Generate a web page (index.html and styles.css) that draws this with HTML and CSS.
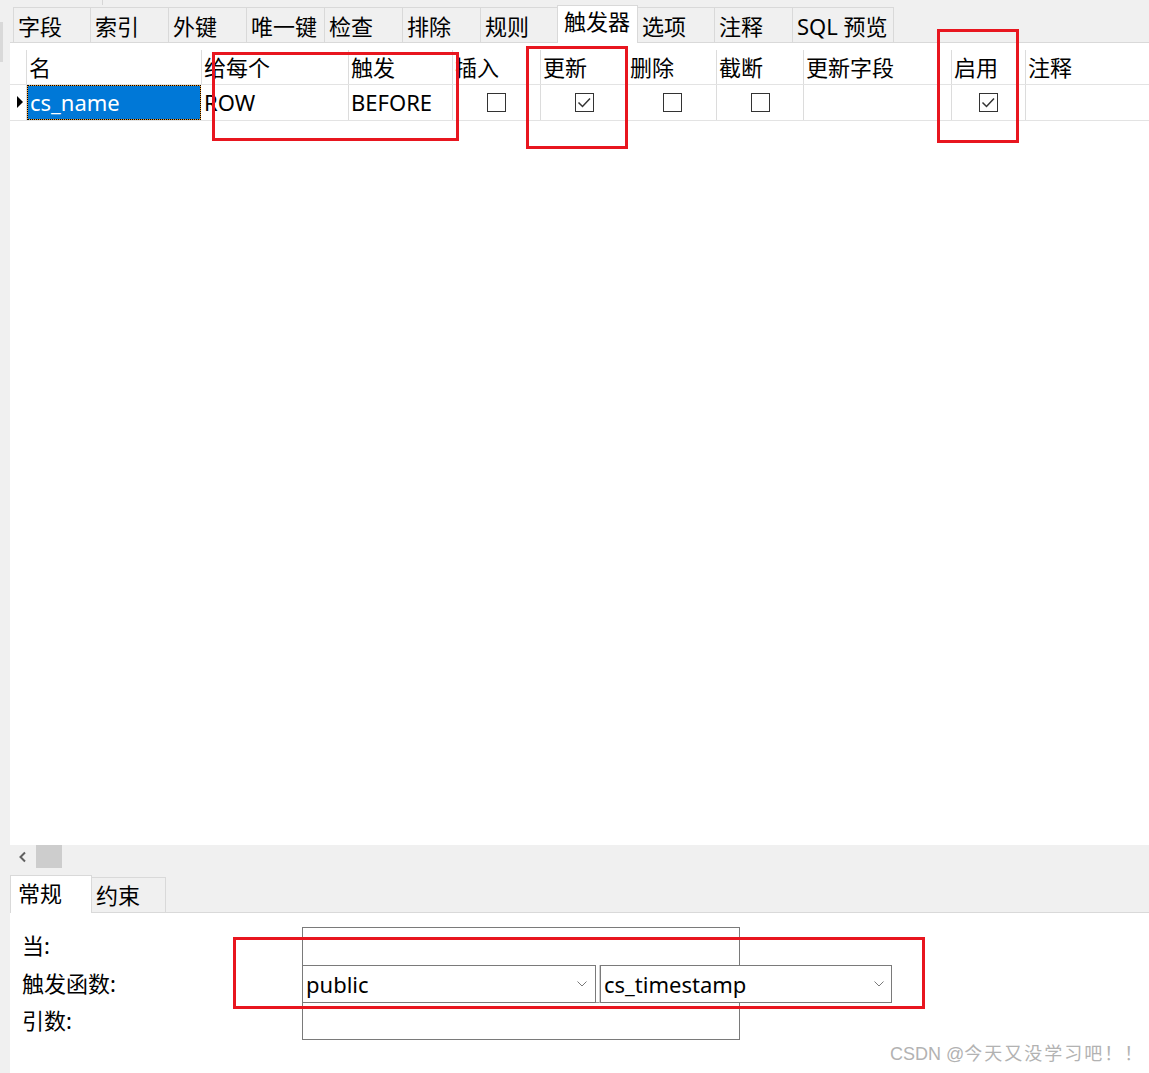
FILE: index.html
```html
<!DOCTYPE html>
<html lang="zh-CN">
<head>
<meta charset="utf-8">
<title>触发器</title>
<link rel="stylesheet" href="styles.css">
</head>
<body>
<div class="app">
  <div class="gutter"><div class="gutter-thumb"></div></div>
  <div class="content">
    <div class="topstrip"><span class="topstrip-tick"></span></div>
    <div class="tabbar">
      <div class="tab w77">字段</div>
      <div class="tab w78">索引</div>
      <div class="tab w78">外键</div>
      <div class="tab w78">唯一键</div>
      <div class="tab w78">检查</div>
      <div class="tab w78">排除</div>
      <div class="tab w77">规则</div>
      <div class="tab tab-active w81">触发器</div>
      <div class="tab w76">选项</div>
      <div class="tab w78">注释</div>
      <div class="tab tab-last w102">SQL 预览</div>
    </div>

    <div class="grid-area">
      <div class="grid-row grid-head">
        <div class="cell"></div>
        <div class="cell">名</div>
        <div class="cell">给每个</div>
        <div class="cell">触发</div>
        <div class="cell">插入</div>
        <div class="cell">更新</div>
        <div class="cell">删除</div>
        <div class="cell">截断</div>
        <div class="cell">更新字段</div>
        <div class="cell">启用</div>
        <div class="cell cell-last">注释</div>
      </div>
      <div class="grid-row grid-data">
        <div class="cell cell-indicator"><span class="row-arrow"></span></div>
        <div class="cell cell-selected">cs_name</div>
        <div class="cell">ROW</div>
        <div class="cell">BEFORE</div>
        <div class="cell cell-check"><span class="cb"></span></div>
        <div class="cell cell-check"><span class="cb"><svg viewBox="0 0 17 17" width="17" height="17"><polyline points="2.5,8.5 6.5,12.5 14,4.5" fill="none" stroke="#333" stroke-width="1.5"/></svg></span></div>
        <div class="cell cell-check"><span class="cb"></span></div>
        <div class="cell cell-check"><span class="cb"></span></div>
        <div class="cell"></div>
        <div class="cell cell-check"><span class="cb"><svg viewBox="0 0 17 17" width="17" height="17"><polyline points="2.5,8.5 6.5,12.5 14,4.5" fill="none" stroke="#333" stroke-width="1.5"/></svg></span></div>
        <div class="cell cell-last"></div>
      </div>
    </div>

    <div class="hscroll">
      <svg class="hscroll-arrow" viewBox="0 0 10 12" width="10" height="12"><polyline points="7,1.5 2.5,6 7,10.5" fill="none" stroke="#606060" stroke-width="2"/></svg>
      <div class="hscroll-thumb"></div>
    </div>

    <div class="subtabs">
      <div class="subtab subtab-active">常规</div>
      <div class="subtab">约束</div>
    </div>

    <div class="form">
      <div class="form-label">当:</div>
      <div class="textbox textbox-top"></div>
      <div class="form-label">触发函数:</div>
      <div class="select-row">
        <div class="select select-schema"><span>public</span><svg viewBox="0 0 10 6" width="10" height="6"><polyline points="0.5,0.5 5,5 9.5,0.5" fill="none" stroke="#7a7a7a" stroke-width="1"/></svg></div>
        <div class="select-split"></div>
        <div class="select select-func"><span>cs_timestamp</span><svg viewBox="0 0 10 6" width="10" height="6"><polyline points="0.5,0.5 5,5 9.5,0.5" fill="none" stroke="#7a7a7a" stroke-width="1"/></svg></div>
      </div>
      <div class="form-label">引数:</div>
      <div class="textbox textbox-bottom"></div>
    </div>
  </div>

  <div class="mark mark-1"></div>
  <div class="mark mark-2"></div>
  <div class="mark mark-3"></div>
  <div class="mark mark-4"></div>

  <div class="watermark">CSDN @<span class="watermark-cjk">今天又没学习吧！！</span></div>
</div>
</body>
</html>
```

FILE: styles.css
```css
* {
  box-sizing: border-box;
}

html,
body {
  margin: 0;
  padding: 0;
}

body {
  background: #f0f0f0;
  font-family: "Noto Sans", "Noto Sans CJK SC", sans-serif;
  font-size: 22px;
  color: #000;
  overflow: hidden;
}

.app {
  position: relative;
  display: flex;
  width: 1149px;
  height: 1073px;
}

.gutter {
  width: 10px;
  flex: none;
}

.gutter-thumb {
  margin-top: 22px;
  width: 3px;
  height: 40px;
  background: #d9d9d9;
}

.content {
  flex: 1;
  min-width: 0;
  display: flex;
  flex-direction: column;
}

/* top strip */
.topstrip {
  height: 5px;
  display: flex;
}

.topstrip-tick {
  margin-left: 92px;
  width: 1px;
  height: 5px;
  background: #d6d6d6;
}

/* main tab bar */
.tabbar {
  height: 38px;
  display: flex;
  align-items: flex-end;
  padding-left: 3px;
  border-bottom: 1px solid #d9d9d9;
}

.tab {
  flex: none;
  height: 35px;
  padding: 5px 0 0 4px;
  line-height: 26px;
  white-space: nowrap;
  background: #f0f0f0;
  border-top: 1px solid #d9d9d9;
  border-left: 1px solid #d9d9d9;
}

.tab-last {
  border-right: 1px solid #d9d9d9;
}

.tab-active {
  height: 38px;
  margin-bottom: -1px;
  padding: 2px 0 0 6px;
  background: #fff;
  border-right: 1px solid #d9d9d9;
}

.tab-active + .tab {
  border-left: none;
  padding-left: 4px;
}

.w76 { width: 76px; }
.w77 { width: 77px; }
.w78 { width: 78px; }
.w81 { width: 81px; }
.w102 { width: 102px; }

/* grid */
.grid-area {
  height: 802px;
  padding-top: 7px;
  background: #fff;
}

.grid-row {
  display: grid;
  grid-template-columns: 17px 175px 147px 104px 88px 87px 89px 87px 148px 74px 1fr;
  border-bottom: 1px solid #e3e3e3;
}

.grid-head {
  height: 35px;
}

.grid-data {
  height: 36px;
}

.cell {
  display: flex;
  align-items: center;
  padding-left: 2px;
  line-height: 30px;
  white-space: nowrap;
  overflow: hidden;
  border-right: 1px solid #dcdcdc;
}

.cell-last {
  border-right: none;
}

.grid-data .cell {
  padding-bottom: 1px;
}

.cell-indicator {
  padding-left: 7px;
}

.row-arrow {
  width: 0;
  height: 0;
  border-left: 6px solid #000;
  border-top: 6px solid transparent;
  border-bottom: 6px solid transparent;
}

.cell-selected {
  margin-right: 1px;
  padding-left: 2px;
  color: #fff;
  border: 1px dotted #000;
  background: linear-gradient(#0078d7, #0078d7) padding-box, linear-gradient(#f09a2c, #f09a2c) border-box;
}

.cell-check {
  justify-content: center;
  padding-left: 0;
}

.cb {
  width: 19px;
  height: 19px;
  border: 1px solid #333;
  background: #fff;
  display: flex;
  align-items: center;
  justify-content: center;
}

.cb svg {
  display: block;
}

/* horizontal scrollbar */
.hscroll {
  height: 30px;
  display: flex;
  align-items: flex-start;
}

.hscroll-arrow {
  margin: 6px 0 0 8px;
  display: block;
}

.hscroll-thumb {
  margin-left: 8px;
  width: 26px;
  height: 23px;
  background: #cdcdcd;
}

/* sub tabs */
.subtabs {
  height: 38px;
  display: flex;
  align-items: flex-end;
  border-bottom: 1px solid #d9d9d9;
}

.subtab {
  width: 74px;
  height: 35px;
  padding: 3px 0 0 4px;
  line-height: 28px;
  background: #f0f0f0;
  border-top: 1px solid #d9d9d9;
  border-right: 1px solid #d9d9d9;
}

.subtab-active {
  width: 82px;
  height: 38px;
  margin-bottom: -1px;
  padding: 3px 0 0 7px;
  background: #fff;
  border-left: 1px solid #d9d9d9;
}

/* form */
.form {
  flex: 1;
  background: #fff;
  padding: 14px 0 0 12px;
  display: grid;
  grid-template-columns: 280px auto;
  grid-template-rows: 38px 38px 37px;
  align-content: start;
}

.form-label {
  display: flex;
  align-items: center;
  padding-bottom: 3px;
  line-height: 30px;
  white-space: nowrap;
}

.textbox {
  width: 438px;
  background: #fff;
  border: 1px solid #7a7a7a;
}

.textbox-top {
  height: 38px;
  border-bottom: none;
}

.textbox-bottom {
  height: 37px;
  border-top: none;
}

.select-row {
  display: flex;
  height: 38px;
}

.select {
  height: 38px;
  display: flex;
  align-items: center;
  justify-content: space-between;
  padding-left: 3px;
  padding-bottom: 1px;
  line-height: 30px;
  background: #fff;
  border: 1px solid #7a7a7a;
}

.select svg {
  display: block;
}

.select-schema {
  width: 294px;
  padding-right: 8px;
}

.select-split {
  width: 4px;
  height: 38px;
  background: #fff;
  border-bottom: 1px solid #9a9a9a;
  border-right: 1px solid #cfcfcf;
}

.select-func {
  width: 292px;
  padding-right: 7px;
}

/* red annotation rectangles drawn over the screenshot */
.mark {
  position: absolute;
  border: 3px solid #e8161f;
}

.mark-1 {
  left: 212px;
  top: 52px;
  width: 247px;
  height: 89px;
}

.mark-2 {
  left: 526px;
  top: 46px;
  width: 102px;
  height: 103px;
}

.mark-3 {
  left: 937px;
  top: 29px;
  width: 82px;
  height: 114px;
}

.mark-4 {
  left: 233px;
  top: 937px;
  width: 692px;
  height: 72px;
}

.watermark {
  position: absolute;
  left: 890px;
  top: 1042px;
  font-family: "Liberation Sans", "Noto Sans CJK SC", sans-serif;
  font-size: 18px;
  line-height: 24px;
  color: #b2b2b2;
  white-space: nowrap;
  text-shadow: 0 0 1px #fff;
}

.watermark-cjk {
  letter-spacing: 2px;
}
```
